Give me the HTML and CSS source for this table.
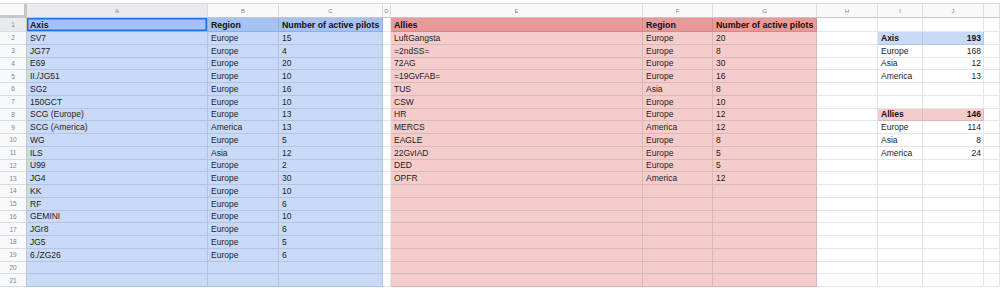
FILE: index.html
```html
<!DOCTYPE html>
<html>
<head>
<meta charset="utf-8">
<title>Pilots</title>
<link rel="stylesheet" href="styles.css">
</head>
<body>
<div class="sheet">
  <div class="top"></div>
  <div class="row hdr">
    <div class="corner"></div><div class="ch sel-h">A</div><div class="ch">B</div><div class="ch">C</div><div class="ch">D</div><div class="ch">E</div><div class="ch">F</div><div class="ch">G</div><div class="ch">H</div><div class="ch">I</div><div class="ch">J</div><div class="ch"></div>
  </div>
  <div class="row first">
    <div class="rh sel-h">1</div><div class="c axh b sel">Axis</div><div class="c axh b">Region</div><div class="c axh b">Number of active pilots</div><div class="c"></div><div class="c alh b">Allies</div><div class="c alh b">Region</div><div class="c alh b">Number of active pilots</div><div class="c"></div><div class="c"></div><div class="c"></div><div class="c"></div>
  </div>
  <div class="row">
    <div class="rh">2</div><div class="c ax">SV7</div><div class="c ax">Europe</div><div class="c ax">15</div><div class="c"></div><div class="c al">LuftGangsta</div><div class="c al">Europe</div><div class="c al">20</div><div class="c"></div><div class="c ax2 b">Axis</div><div class="c ax2 b r">193</div><div class="c"></div>
  </div>
  <div class="row">
    <div class="rh">3</div><div class="c ax">JG77</div><div class="c ax">Europe</div><div class="c ax">4</div><div class="c"></div><div class="c al">=2ndSS=</div><div class="c al">Europe</div><div class="c al">8</div><div class="c"></div><div class="c">Europe</div><div class="c r">168</div><div class="c"></div>
  </div>
  <div class="row">
    <div class="rh">4</div><div class="c ax">E69</div><div class="c ax">Europe</div><div class="c ax">20</div><div class="c"></div><div class="c al">72AG</div><div class="c al">Europe</div><div class="c al">30</div><div class="c"></div><div class="c">Asia</div><div class="c r">12</div><div class="c"></div>
  </div>
  <div class="row">
    <div class="rh">5</div><div class="c ax">II./JG51</div><div class="c ax">Europe</div><div class="c ax">10</div><div class="c"></div><div class="c al">=19GvFAB=</div><div class="c al">Europe</div><div class="c al">16</div><div class="c"></div><div class="c">America</div><div class="c r">13</div><div class="c"></div>
  </div>
  <div class="row">
    <div class="rh">6</div><div class="c ax">SG2</div><div class="c ax">Europe</div><div class="c ax">16</div><div class="c"></div><div class="c al">TUS</div><div class="c al">Asia</div><div class="c al">8</div><div class="c"></div><div class="c"></div><div class="c"></div><div class="c"></div>
  </div>
  <div class="row">
    <div class="rh">7</div><div class="c ax">150GCT</div><div class="c ax">Europe</div><div class="c ax">10</div><div class="c"></div><div class="c al">CSW</div><div class="c al">Europe</div><div class="c al">10</div><div class="c"></div><div class="c"></div><div class="c"></div><div class="c"></div>
  </div>
  <div class="row">
    <div class="rh">8</div><div class="c ax">SCG (Europe)</div><div class="c ax">Europe</div><div class="c ax">13</div><div class="c"></div><div class="c al">HR</div><div class="c al">Europe</div><div class="c al">12</div><div class="c"></div><div class="c al2 b">Allies</div><div class="c al2 b r">146</div><div class="c"></div>
  </div>
  <div class="row">
    <div class="rh">9</div><div class="c ax">SCG (America)</div><div class="c ax">America</div><div class="c ax">13</div><div class="c"></div><div class="c al">MERCS</div><div class="c al">America</div><div class="c al">12</div><div class="c"></div><div class="c">Europe</div><div class="c r">114</div><div class="c"></div>
  </div>
  <div class="row">
    <div class="rh">10</div><div class="c ax">WG</div><div class="c ax">Europe</div><div class="c ax">5</div><div class="c"></div><div class="c al">EAGLE</div><div class="c al">Europe</div><div class="c al">8</div><div class="c"></div><div class="c">Asia</div><div class="c r">8</div><div class="c"></div>
  </div>
  <div class="row">
    <div class="rh">11</div><div class="c ax">ILS</div><div class="c ax">Asia</div><div class="c ax">12</div><div class="c"></div><div class="c al">22GvIAD</div><div class="c al">Europe</div><div class="c al">5</div><div class="c"></div><div class="c">America</div><div class="c r">24</div><div class="c"></div>
  </div>
  <div class="row">
    <div class="rh">12</div><div class="c ax">U99</div><div class="c ax">Europe</div><div class="c ax">2</div><div class="c"></div><div class="c al">DED</div><div class="c al">Europe</div><div class="c al">5</div><div class="c"></div><div class="c"></div><div class="c"></div><div class="c"></div>
  </div>
  <div class="row">
    <div class="rh">13</div><div class="c ax">JG4</div><div class="c ax">Europe</div><div class="c ax">30</div><div class="c"></div><div class="c al">OPFR</div><div class="c al">America</div><div class="c al">12</div><div class="c"></div><div class="c"></div><div class="c"></div><div class="c"></div>
  </div>
  <div class="row">
    <div class="rh">14</div><div class="c ax">KK</div><div class="c ax">Europe</div><div class="c ax">10</div><div class="c"></div><div class="c al"></div><div class="c al"></div><div class="c al"></div><div class="c"></div><div class="c"></div><div class="c"></div><div class="c"></div>
  </div>
  <div class="row">
    <div class="rh">15</div><div class="c ax">RF</div><div class="c ax">Europe</div><div class="c ax">6</div><div class="c"></div><div class="c al"></div><div class="c al"></div><div class="c al"></div><div class="c"></div><div class="c"></div><div class="c"></div><div class="c"></div>
  </div>
  <div class="row">
    <div class="rh">16</div><div class="c ax">GEMINI</div><div class="c ax">Europe</div><div class="c ax">10</div><div class="c"></div><div class="c al"></div><div class="c al"></div><div class="c al"></div><div class="c"></div><div class="c"></div><div class="c"></div><div class="c"></div>
  </div>
  <div class="row">
    <div class="rh">17</div><div class="c ax">JGr8</div><div class="c ax">Europe</div><div class="c ax">6</div><div class="c"></div><div class="c al"></div><div class="c al"></div><div class="c al"></div><div class="c"></div><div class="c"></div><div class="c"></div><div class="c"></div>
  </div>
  <div class="row">
    <div class="rh">18</div><div class="c ax">JG5</div><div class="c ax">Europe</div><div class="c ax">5</div><div class="c"></div><div class="c al"></div><div class="c al"></div><div class="c al"></div><div class="c"></div><div class="c"></div><div class="c"></div><div class="c"></div>
  </div>
  <div class="row">
    <div class="rh">19</div><div class="c ax">6./ZG26</div><div class="c ax">Europe</div><div class="c ax">6</div><div class="c"></div><div class="c al"></div><div class="c al"></div><div class="c al"></div><div class="c"></div><div class="c"></div><div class="c"></div><div class="c"></div>
  </div>
  <div class="row">
    <div class="rh">20</div><div class="c ax"></div><div class="c ax"></div><div class="c ax"></div><div class="c"></div><div class="c al"></div><div class="c al"></div><div class="c al"></div><div class="c"></div><div class="c"></div><div class="c"></div><div class="c"></div>
  </div>
  <div class="row">
    <div class="rh">21</div><div class="c ax"></div><div class="c ax"></div><div class="c ax"></div><div class="c"></div><div class="c al"></div><div class="c al"></div><div class="c al"></div><div class="c"></div><div class="c"></div><div class="c"></div><div class="c"></div>
  </div>
</div>
</body>
</html>
```

FILE: styles.css
```css
html, body {
  margin: 0;
  padding: 0;
  background: #ffffff;
  overflow: hidden;
}
.sheet {
  display: flex;
  flex-direction: column;
  width: 1000px;
  height: 288px;
  font-family: "Liberation Sans", Arial, sans-serif;
  color: #222222;
}
.top {
  height: 3px;
  flex: none;
  border-bottom: 1px solid #dadce0;
}
.row {
  display: grid;
  grid-template-columns: 27px 181px 71px 104px 8px 252px 70px 104px 61px 45px 61px 1fr;
  height: 12.75px;
  flex: none;
}
.row.hdr {
  height: 14px;
}
.row.first {
  height: 14px;
}
.row > div {
  box-sizing: border-box;
  min-width: 0;
  overflow: hidden;
  white-space: nowrap;
  display: flex;
  align-items: center;
}
.corner {
  background: #f8f9fa;
  border-right: 3px solid #c4c7c5;
  border-bottom: 3px solid #c4c7c5;
}
.ch {
  background: #f8f9fa;
  border-right: 1px solid #dadce0;
  border-bottom: 1px solid #c4c7c5;
  justify-content: center;
  font-size: 6px;
  color: #7f868b;
}
.rh {
  background: #f8f9fa;
  border-right: 1px solid #c4c7c5;
  border-bottom: 1px solid #dadce0;
  justify-content: center;
  font-size: 6.5px;
  color: #7f868b;
}
.sel-h {
  background: #e8eaed;
}
.c {
  border-right: 1px solid rgba(0, 0, 0, 0.1);
  border-bottom: 1px solid rgba(0, 0, 0, 0.1);
  padding: 0 3px;
  font-size: 8.5px;
}
.b {
  font-weight: bold;
  font-size: 8.8px;
  color: #111111;
}
.r {
  justify-content: flex-end;
  padding-right: 2px;
}
.axh {
  background: #a4c2f4;
}
.ax, .ax2 {
  background: #c9daf8;
}
.alh {
  background: #ea9999;
}
.al, .al2 {
  background: #f4cccc;
}
.ax2, .al2 {
  font-size: 8.5px;
}
.sel {
  box-shadow: inset 0 0 0 1.5px #1a73e8;
}
```
